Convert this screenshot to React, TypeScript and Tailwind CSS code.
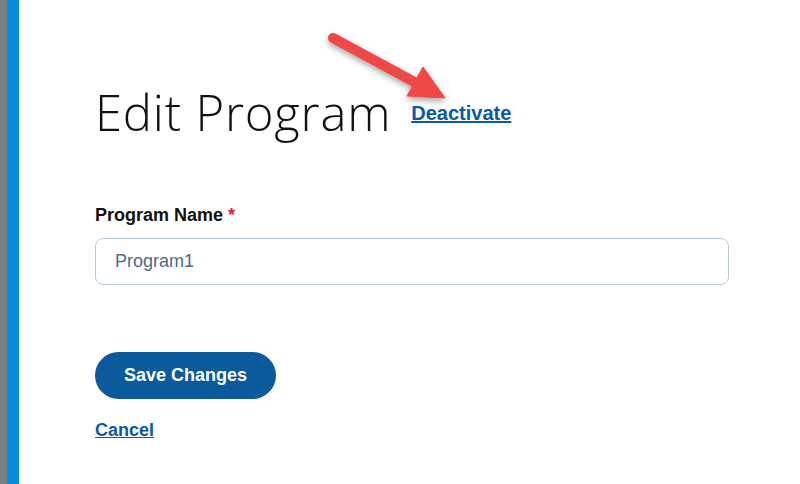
export default function App() {
  return (
    <div className="flex w-[800px] h-[484px] bg-white overflow-hidden font-['Liberation_Sans',Arial,sans-serif]">
      {/* Side bars */}
      <div className="w-[7px] shrink-0 bg-[#7b8085]" />
      <div className="w-[12px] shrink-0 bg-[#0b8ae2]" />

      <div className="relative flex-1 pl-[76px] pt-[88px]">
        {/* Header */}
        <div className="flex items-center gap-5 h-[49px]">
          <h1 className="font-['Open_Sans',sans-serif] font-light text-[49px] leading-none tracking-[0.8px] text-[#111]">
            Edit Program
          </h1>
          <a href="#" className="text-[20px] leading-6 font-bold text-[#0b5a9e] underline">
            Deactivate
          </a>
        </div>

        {/* Annotation arrow */}
        <svg
          className="absolute left-[281px] top-[20px]"
          width="170"
          height="100"
          viewBox="0 0 170 100"
        >
          <defs>
            <filter id="sh" x="-20%" y="-20%" width="140%" height="160%">
              <feDropShadow dx="0" dy="3" stdDeviation="3" floodColor="#000" floodOpacity="0.35" />
            </filter>
          </defs>
          <g filter="url(#sh)" fill="#f04646" stroke="#f04646">
            <line x1="33" y1="18" x2="118" y2="64" strokeWidth="10" strokeLinecap="round" />
            <polygon points="145,78 123,47 107,76" strokeWidth="1" strokeLinejoin="round" />
          </g>
        </svg>

        {/* Form */}
        <div className="mt-[66px]">
          <label className="block text-[18px] leading-6 font-bold text-[#111]">
            Program Name <span className="text-[#e0223c]">*</span>
          </label>
          <div className="mt-[11px] w-[634px] h-[47px] rounded-lg border border-[#b9c9d7] flex items-center pl-[19px]">
            <span className="text-[18px] text-[#4c6b86]">Program1</span>
          </div>
        </div>

        <button className="mt-[67px] w-[181px] h-[47px] rounded-full bg-[#0a5a9c] text-white text-[18px] font-bold">
          Save Changes
        </button>

        <div className="mt-[19px]">
          <a href="#" className="text-[18px] leading-6 font-bold text-[#0b5a9e] underline">
            Cancel
          </a>
        </div>
      </div>
    </div>
  );
}
